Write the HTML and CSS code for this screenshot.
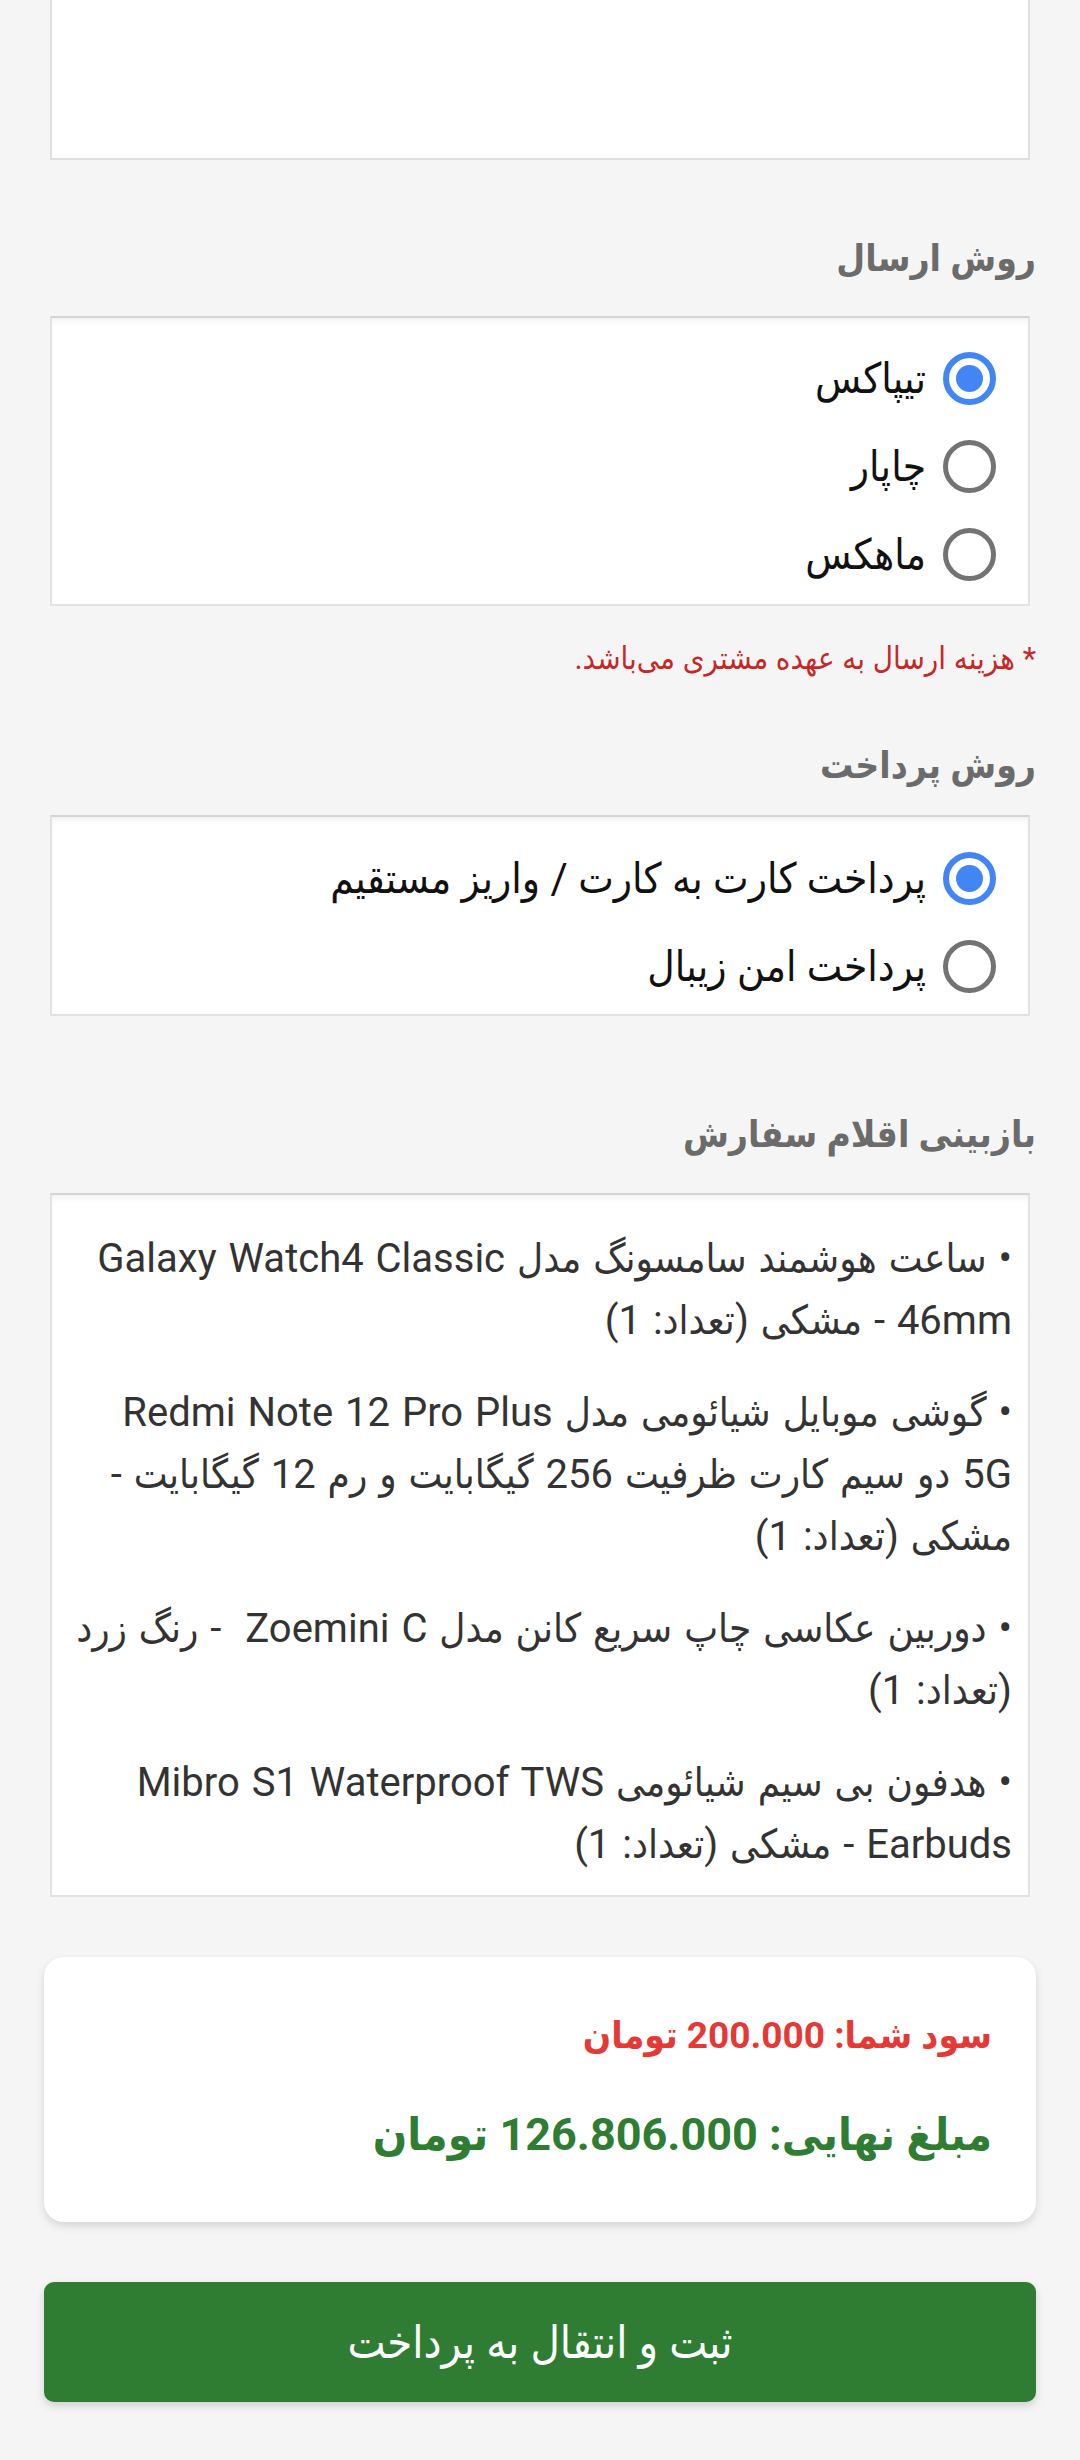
FILE: index.html
```html
<!DOCTYPE html>
<html lang="fa" dir="rtl">
<head>
<meta charset="utf-8">
<meta name="viewport" content="width=1080">
<title>تکمیل سفارش</title>
<link rel="stylesheet" href="styles.css">
</head>
<body>
<main class="page">
  <div class="textarea-box"></div>

  <h3 class="section-label label-ship">روش ارسال</h3>
  <div class="option-box ship-box">
    <label class="radio-row"><span class="radio checked"></span><span class="radio-text">تیپاکس</span></label>
    <label class="radio-row"><span class="radio"></span><span class="radio-text">چاپار</span></label>
    <label class="radio-row"><span class="radio"></span><span class="radio-text">ماهکس</span></label>
  </div>
  <p class="ship-note">* هزینه ارسال به عهده مشتری می‌باشد.</p>

  <h3 class="section-label label-pay">روش پرداخت</h3>
  <div class="option-box pay-box">
    <label class="radio-row"><span class="radio checked"></span><span class="radio-text">پرداخت کارت به کارت / واریز مستقیم</span></label>
    <label class="radio-row"><span class="radio"></span><span class="radio-text">پرداخت امن زیبال</span></label>
  </div>

  <h3 class="section-label label-items">بازبینی اقلام سفارش</h3>
  <div class="option-box items-box">
    <p class="item">• ساعت هوشمند سامسونگ مدل Galaxy Watch4 Classic 46mm - مشکی (تعداد: 1)</p>
    <p class="item">• گوشی موبایل شیائومی مدل Redmi Note 12 Pro Plus 5G دو سیم کارت ظرفیت 256 گیگابایت و رم 12 گیگابایت - مشکی (تعداد: 1)</p>
    <p class="item">• دوربین عکاسی چاپ سریع کانن مدل Zoemini C&nbsp; - رنگ زرد (تعداد: 1)</p>
    <p class="item">• هدفون بی سیم شیائومی Mibro S1 Waterproof TWS Earbuds - مشکی (تعداد: 1)</p>
  </div>

  <section class="summary-card">
    <p class="profit">سود شما: 200.000 تومان</p>
    <p class="final">مبلغ نهایی: 126.806.000 تومان</p>
  </section>

  <button class="submit-btn" type="button">ثبت و انتقال به پرداخت</button>
</main>
</body>
</html>
```

FILE: styles.css
```css
* { box-sizing: border-box; }

html, body {
  margin: 0;
  padding: 0;
  background: #f5f5f5;
}

body {
  font-family: Roboto, "DejaVu Sans Condensed", "DejaVu Sans", sans-serif;
  color: #222;
  direction: rtl;
}

.page {
  padding: 0 44px 59px;
  display: flex;
  flex-direction: column;
}

.textarea-box {
  height: 160px;
  margin: 0 6px;
  background: #fff;
  border: 2px solid #e0e0e0;
  border-top: none;
}

.section-label {
  margin: 0;
  font-size: 37px;
  line-height: 50px;
  font-weight: bold;
  color: #6b6b6b;
}

.label-ship { margin-top: 74px; margin-bottom: 32px; }
.label-pay { margin-top: 60px; margin-bottom: 24px; }
.label-items { margin-top: 94px; margin-bottom: 33px; }

.option-box {
  margin: 0 6px;
  background: #fff;
  border: 2px solid #e2e2e2;
  border-top-color: #d4d4d4;
  box-shadow: inset 0 6px 10px -6px rgba(0, 0, 0, 0.10);
}

.ship-box { padding: 16px 32px 6px; }
.pay-box { padding: 17px 32px 4px; }

.radio-row {
  display: flex;
  align-items: center;
  gap: 17px;
  height: 88px;
}

.radio {
  flex: none;
  width: 53px;
  height: 53px;
  border-radius: 50%;
  border: 5px solid #737373;
  background: #fff;
  position: relative;
}

.radio.checked {
  border: 6px solid #4285f4;
}

.radio.checked::after {
  content: "";
  position: absolute;
  inset: 7px;
  border-radius: 50%;
  background: #4285f4;
}

.radio-text {
  font-size: 42px;
  color: #111;
}

.ship-note {
  margin: 31px 0 0;
  font-size: 31px;
  line-height: 44px;
  color: #c62828;
}

.items-box {
  padding: 33px 16px 19px 14px;
}

.item {
  margin: 0 0 30px;
  font-size: 40px;
  line-height: 62px;
  word-spacing: 2px;
  color: #333;
}

.item:last-child { margin-bottom: 0; }

.summary-card {
  margin-top: 60px;
  height: 265px;
  background: #fff;
  border-radius: 20px;
  box-shadow: 0 4px 8px rgba(0, 0, 0, 0.13);
  padding: 47px 44px 0;
}

.profit {
  margin: 0;
  font-size: 37px;
  line-height: 64px;
  font-weight: bold;
  color: #e53935;
}

.final {
  margin: 35px 0 0;
  font-size: 45px;
  line-height: 64px;
  font-weight: bold;
  color: #2e7d32;
}

.submit-btn {
  margin-top: 60px;
  height: 120px;
  width: 100%;
  border: none;
  border-radius: 10px;
  background: #2e7d32;
  color: #fff;
  font-family: Roboto, "DejaVu Sans Condensed", "DejaVu Sans", sans-serif;
  font-size: 45px;
  font-weight: normal;
  box-shadow: 0 4px 8px rgba(0, 0, 0, 0.15);
}
```
